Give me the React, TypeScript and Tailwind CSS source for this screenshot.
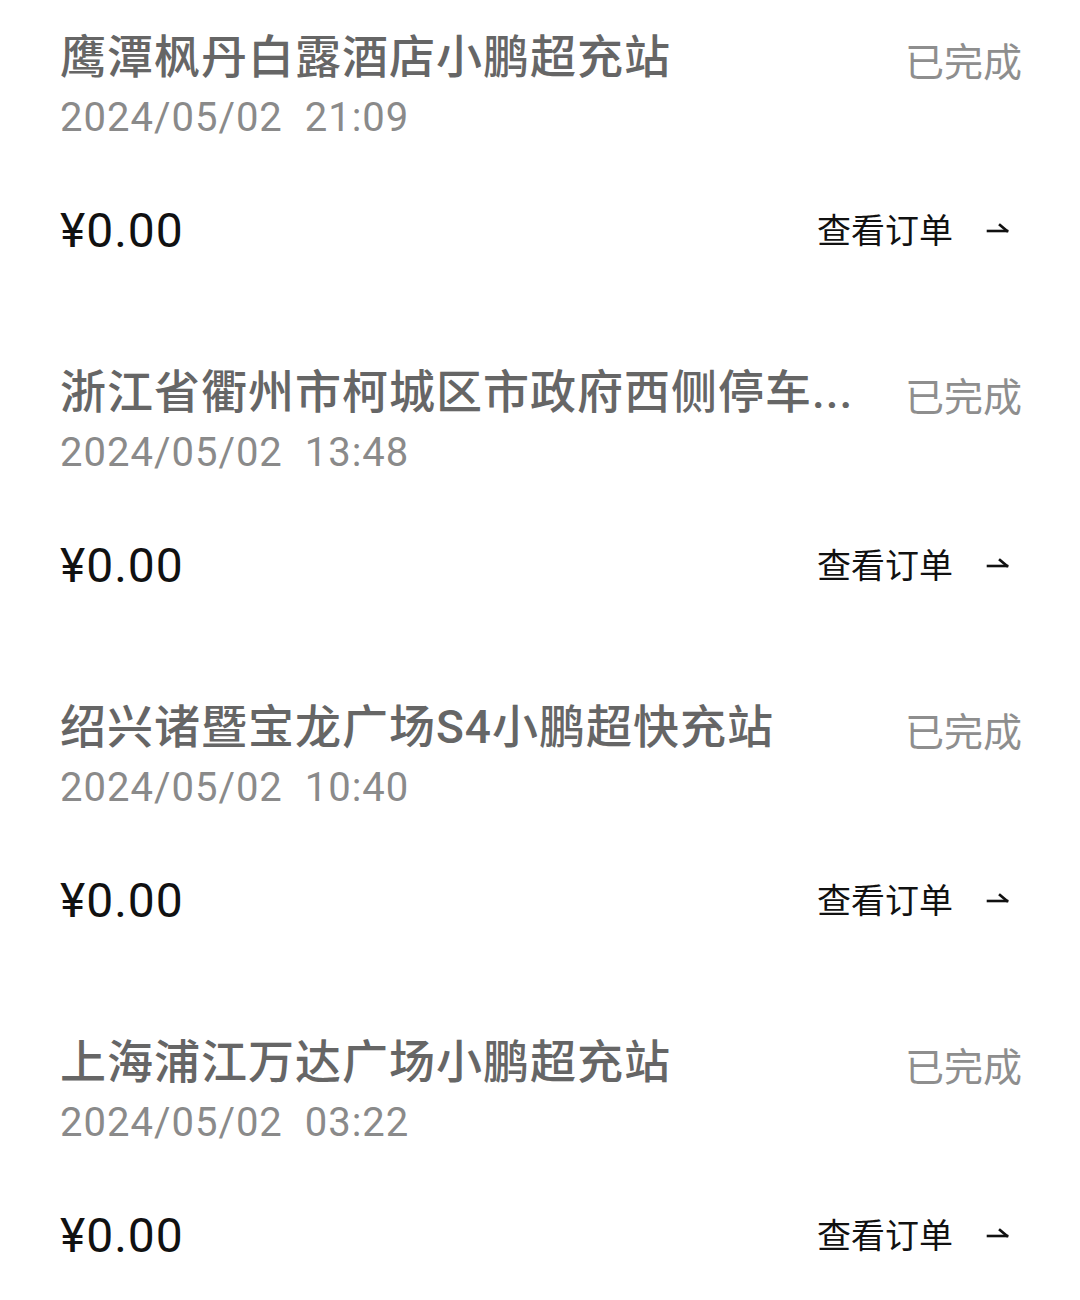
import React from 'react';

const orders = [
  { name: '鹰潭枫丹白露酒店小鹏超充站', time: '2024/05/02  21:09', amount: '¥0.00' },
  { name: '浙江省衢州市柯城区市政府西侧停车...', time: '2024/05/02  13:48', amount: '¥0.00' },
  { name: '绍兴诸暨宝龙广场S4小鹏超快充站', time: '2024/05/02  10:40', amount: '¥0.00' },
  { name: '上海浦江万达广场小鹏超充站', time: '2024/05/02  03:22', amount: '¥0.00' },
];

const font = { fontFamily: 'Roboto, "Noto Sans CJK SC", sans-serif' };

const HalfArrow = () => (
  <svg width="24" height="16" viewBox="0 0 24 16" fill="none" stroke="#111" strokeWidth="2.6" strokeLinecap="square">
    <line x1="2" y1="11" x2="21" y2="11" />
    <line x1="14" y1="5" x2="21" y2="11" />
  </svg>
);

const App: React.FC = () => {
  return (
    <div className="w-[1080px] h-[1300px] overflow-hidden bg-white pt-[29px]" style={font}>
      {orders.map((o, i) => (
        <div key={i} className="h-[335px] px-[60px] flex flex-col">
          {/* Title + status */}
          <div className="flex justify-between items-start h-[56px]">
            <p className="text-[46px] leading-[56px] font-medium text-[#666666] whitespace-nowrap tracking-[1px]">{o.name}</p>
            <span className="text-[39px] leading-[56px] text-[#8e8e8e] pt-[6px] whitespace-nowrap -mr-[2px]">已完成</span>
          </div>
          {/* Time */}
          <p className="mt-[9px] h-[48px] text-[40px] leading-[48px] text-[#8a8a8a] whitespace-pre tracking-[1px]">{o.time}</p>
          {/* Amount + link */}
          <div className="mt-[61px] h-[56px] flex justify-between items-center">
            <span className="text-[48px] leading-[56px] text-[#111111] tracking-[1px]">{o.amount}</span>
            <button className="flex items-center text-[34px] leading-[56px] text-[#111111] mr-[10px]">
              查看订单
              <span className="ml-[33px] mt-[-6px]"><HalfArrow /></span>
            </button>
          </div>
        </div>
      ))}
    </div>
  );
};

export default App;
